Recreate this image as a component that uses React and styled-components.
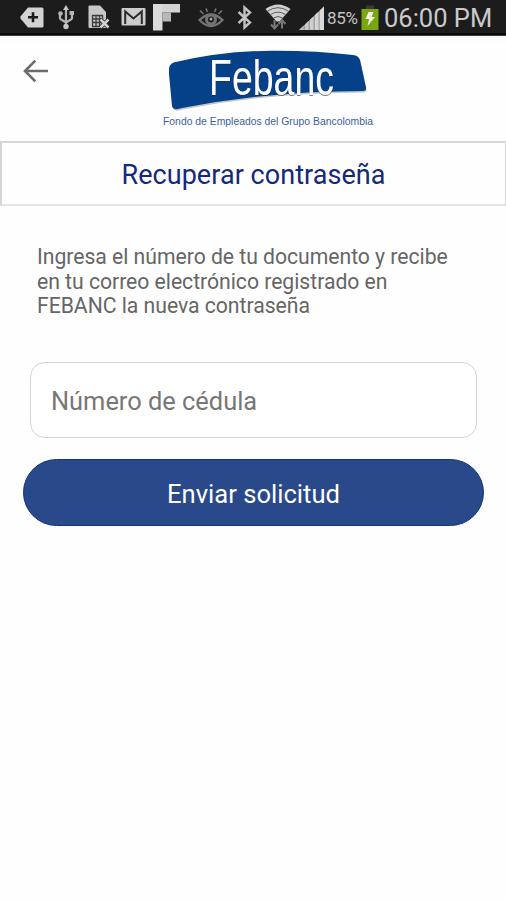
import { useState } from 'react';
import styled, { createGlobalStyle } from 'styled-components';

const App = () => {
  const [document, setDocument] = useState('');

  return (
    <>
      <GlobalStyle />
      <Screen>
        <StatusBar />
        <Header>
          <BackButton aria-label="Volver">
            <svg width="26" height="24" viewBox="0 0 26 24" fill="none">
              <path d="M12.300 1.700 2 12l10.300 10.300M2 12h23" stroke="#6b6b6b" strokeWidth="2.600" />
            </svg>
          </BackButton>
          <Logo />
        </Header>
        <TitleBar>
          <Title>Recuperar contraseña</Title>
        </TitleBar>
        <Form onSubmit={(e) => e.preventDefault()}>
          <Message>
            Ingresa el número de tu documento y recibe
            <br />
            en tu correo electrónico registrado en
            <br />
            FEBANC la nueva contraseña
          </Message>
          <Input
            value={document}
            onChange={(e) => setDocument(e.target.value)}
            placeholder="Número de cédula"
          />
          <SubmitButton type="submit">Enviar solicitud</SubmitButton>
        </Form>
      </Screen>
    </>
  );
};

export default App;

const StatusBar = () => {
  return (
    <Bar>
      <StatusIcon width="24" viewBox="0 0 24 36" $left={20}>
        <path d="M8 7.500h14q1.500 0 1.500 1.500v17q0 1.500-1.500 1.500H8L.5 18.500v-2z" fill="#d2d2d2" />
        <path d="M8 17.200h10M13 12.300v10" stroke="#1b1b1b" strokeWidth="2.600" />
      </StatusIcon>
      <StatusIcon width="16" viewBox="0 0 16 36" $left={13.5}>
        <path d="M8 9v17M2 14v3.500q0 2 2 2.500l4 2.500M14 12v5.500q0 2-2 2.500l-4 2.500" fill="none" stroke="#b5b5b5" strokeWidth="2.200" />
        <path d="M8 5l3 5H5z" fill="#c6c6c6" />
        <circle cx="2.500" cy="13.500" r="2.300" fill="#b5b5b5" />
        <path d="M11.500 11H16v4h-4.500z" fill="#b5b5b5" />
        <circle cx="8" cy="26.500" r="2.700" fill="#c6c6c6" />
      </StatusIcon>
      <StatusIcon width="22" viewBox="0 0 22 36" $left={14.5}>
        <path d="M1.500 5.500h10.500l6 6.500v16H1.500q-1 0-1-1V6.500q0-1 1-1z" fill="#c8c8c8" />
        <path d="M4.500 15.500h10v11h-10zM8 15.500v11M11.500 15.500v11M4.500 19h10M4.500 22.500h10" fill="none" stroke="#3a3a3a" strokeWidth="1.300" />
        <path d="M12.500 19.500l8 8M20.500 19.500l-8 8" stroke="#1b1b1b" strokeWidth="4" />
        <path d="M12.500 19.500l8 8M20.500 19.500l-8 8" stroke="#d2d2d2" strokeWidth="2.600" />
      </StatusIcon>
      <StatusIcon width="25" viewBox="0 0 25 36" $left={10.5}>
        <rect x="0.500" y="8" width="24" height="17.500" rx="1" fill="#cdcdcd" />
        <path d="M4.200 24V11.500l8.300 7L20.800 11.500V24" fill="none" stroke="#2b2b2b" strokeWidth="2" />
      </StatusIcon>
      <StatusIcon width="27" viewBox="0 0 27 36" $left={7.5}>
        <path d="M0 4h27v8.500H0z" fill="#d4d4d4" />
        <path d="M0 4h9.500v26.500H0z" fill="#dadada" />
        <path d="M9.500 12.500H18V21.500H9.500z" fill="#b8b8b8" />
      </StatusIcon>
      <StatusIcon width="26" viewBox="0 0 26 36" $left={17.5}>
        <g fill="none" stroke="#747474">
          <path d="M1.500 20Q13 9 24.500 20 13 32 1.500 20z" strokeWidth="2.300" />
          <path d="M2 10.500l3.500 3.500M8 8.500l1.500 3.500M18 8.500L16.500 12M24 10.500L20.500 14" strokeWidth="1.700" />
          <circle cx="13" cy="19.500" r="4.500" strokeWidth="3" />
        </g>
        <circle cx="13" cy="19" r="1.500" fill="#a5a5a5" />
      </StatusIcon>
      <StatusIcon width="15" viewBox="0 0 15 36" $left={13}>
        <path d="M1.500 12l11.500 10.500-5.500 5V7.500l5.500 5L1.500 23" fill="none" stroke="#c2c2c2" strokeWidth="2.400" />
      </StatusIcon>
      <StatusIcon width="28" viewBox="0 0 28 36" $left={12.5}>
        <path d="M1.500 9Q14 0 26.500 9L15.500 21.500h-3z" fill="#d0d0d0" />
        <g fill="none" stroke="#5a5a5a" strokeWidth="1">
          <path d="M3.500 11.200q10.500-7 21 0" />
          <path d="M6.500 14.600q7.500-5 15 0" />
          <path d="M9.500 18q4.500-3 9 0" />
        </g>
        <path d="M10.500 20v8M7 24.500l3.500 4 3.500-4M18 28.500V21M14.500 24l3.500-4 3.500 4" fill="none" stroke="#777" strokeWidth="2" />
      </StatusIcon>
      <StatusIcon width="25" viewBox="0 0 25 36" $left={7}>
        <path d="M0 30l25-23.500V30z" fill="#a2a2a2" />
        <path d="M0 30l4.500-4.200V30z" fill="#bdbdbd" />
        <path d="M6 24.400l3.500-3.300V30H6z" fill="#c8c8c8" />
        <path d="M11 19.700l3.500-3.300V30H11z" fill="#cecece" />
        <path d="M16 15l3.500-3.300V30H16z" fill="#d4d4d4" />
        <path d="M20.800 10.500L25 6.500V30h-4.200z" fill="#d9d9d9" />
      </StatusIcon>
      <Percent>85%</Percent>
      <StatusIcon width="18" viewBox="0 0 18 36" $left={2}>
        <path d="M5 5.500h8V9H5z" fill="#3c3c3c" />
        <path d="M.5 9h17v21H.5z" fill="#79a80e" />
        <path d="M7.500 12h5l-2 5H14l-7.500 9 1.500-7H4.500z" fill="#eef3df" />
      </StatusIcon>
      <Clock>06:00 PM</Clock>
    </Bar>
  );
};

const badge =
  'M9 27Q9 22.500 13.500 20.500Q62 9 112 8.700Q156 8.500 193 13Q198.500 13.500 200 18L206 45.500Q206.500 48.800 203 49Q110 49 22 66Q13 69 12 64L9 32z';

const Logo = () => {
  return (
    <LogoImage width="216" height="94" viewBox="0 0 216 94">
      <path d={badge} transform="translate(0.500 1.500)" fill="#c4c4c4" />
      <path d={badge} fill="#044189" />
      <Wordmark x="49" y="53" textLength="125" lengthAdjust="spacingAndGlyphs">
        Febanc
      </Wordmark>
      <Tagline x="3" y="83" textLength="210" lengthAdjust="spacingAndGlyphs">
        Fondo de Empleados del Grupo Bancolombia
      </Tagline>
    </LogoImage>
  );
};

const GlobalStyle = createGlobalStyle`
  * {
    box-sizing: border-box;
  }

  body {
    margin: 0;
    background-color: #fefefe;
    font-family: Roboto, 'Liberation Sans', sans-serif;
  }
`;

const Screen = styled.div`
  display: flex;
  flex-direction: column;
  width: 506px;
  height: 900px;
  background-color: #fefefe;
`;

const Bar = styled.div`
  display: flex;
  align-items: center;
  height: 36px;
  flex-shrink: 0;
  background: linear-gradient(#1c1c1c 33px, #050505 34px, #050505 35px, #777 36px);
  white-space: nowrap;
`;

const StatusIcon = styled.svg`
  flex-shrink: 0;
  height: 36px;
  margin-left: ${({ $left }) => $left}px;
`;

const Percent = styled.span`
  width: 32px;
  margin-left: 3px;
  color: #c4c4c4;
  font-size: 17px;
  line-height: 36px;
  letter-spacing: -0.3px;
`;

const Clock = styled.span`
  margin-left: 5px;
  color: #cacaca;
  font-size: 25.5px;
  line-height: 37px;
`;

const Header = styled.header`
  display: flex;
  align-items: flex-start;
  height: 105px;
  flex-shrink: 0;
  background: linear-gradient(#f6f6f6, #fefefe 6px);
`;

const BackButton = styled.button`
  display: flex;
  margin: 23px 0 0 23px;
  padding: 0;
  border: none;
  background: none;
`;

const LogoImage = styled.svg`
  margin: 6px 0 0 111px;
  overflow: visible;
`;

const Wordmark = styled.text`
  fill: #fff;
  font-family: 'Liberation Sans', Arial, sans-serif;
  font-size: 50px;
  filter: drop-shadow(0.5px 1px 0.6px rgba(30, 40, 70, 0.6));
`;

const Tagline = styled.text`
  fill: #3d5fa0;
  font-family: 'Liberation Sans', Arial, sans-serif;
  font-size: 11px;
`;

const TitleBar = styled.div`
  display: flex;
  align-items: center;
  justify-content: center;
  height: 65px;
  flex-shrink: 0;
  padding-top: 2px;
  border: 2px solid #d6d6d6;
  border-right-width: 1px;
  border-bottom-color: #e4e4e4;
`;

const Title = styled.h1`
  margin: 0;
  color: #14287c;
  font-size: 27px;
  font-weight: 400;
  line-height: 32px;
  letter-spacing: 0.05px;
`;

const Form = styled.form`
  display: flex;
  flex-direction: column;
  padding: 39px 22px 0 23px;
`;

const Message = styled.p`
  margin: 0 0 43px 14px;
  color: #666;
  font-size: 21.2px;
  line-height: 24.6px;
  letter-spacing: -0.03px;
  white-space: nowrap;
`;

const Input = styled.input`
  height: 76px;
  margin: 0 7px 21px;
  padding: 2px 20px 0;
  border: 1.5px solid #d4d4d4;
  border-radius: 15px;
  background-color: #fff;
  color: #555;
  font-family: inherit;
  font-size: 25.4px;

  &::placeholder {
    color: #777;
  }
`;

const SubmitButton = styled.button`
  height: 67px;
  padding: 3px 0 0;
  border: 1px solid #12357f;
  border-radius: 34px;
  background-color: #29498a;
  color: #fff;
  font-family: inherit;
  font-size: 25.6px;
`;
